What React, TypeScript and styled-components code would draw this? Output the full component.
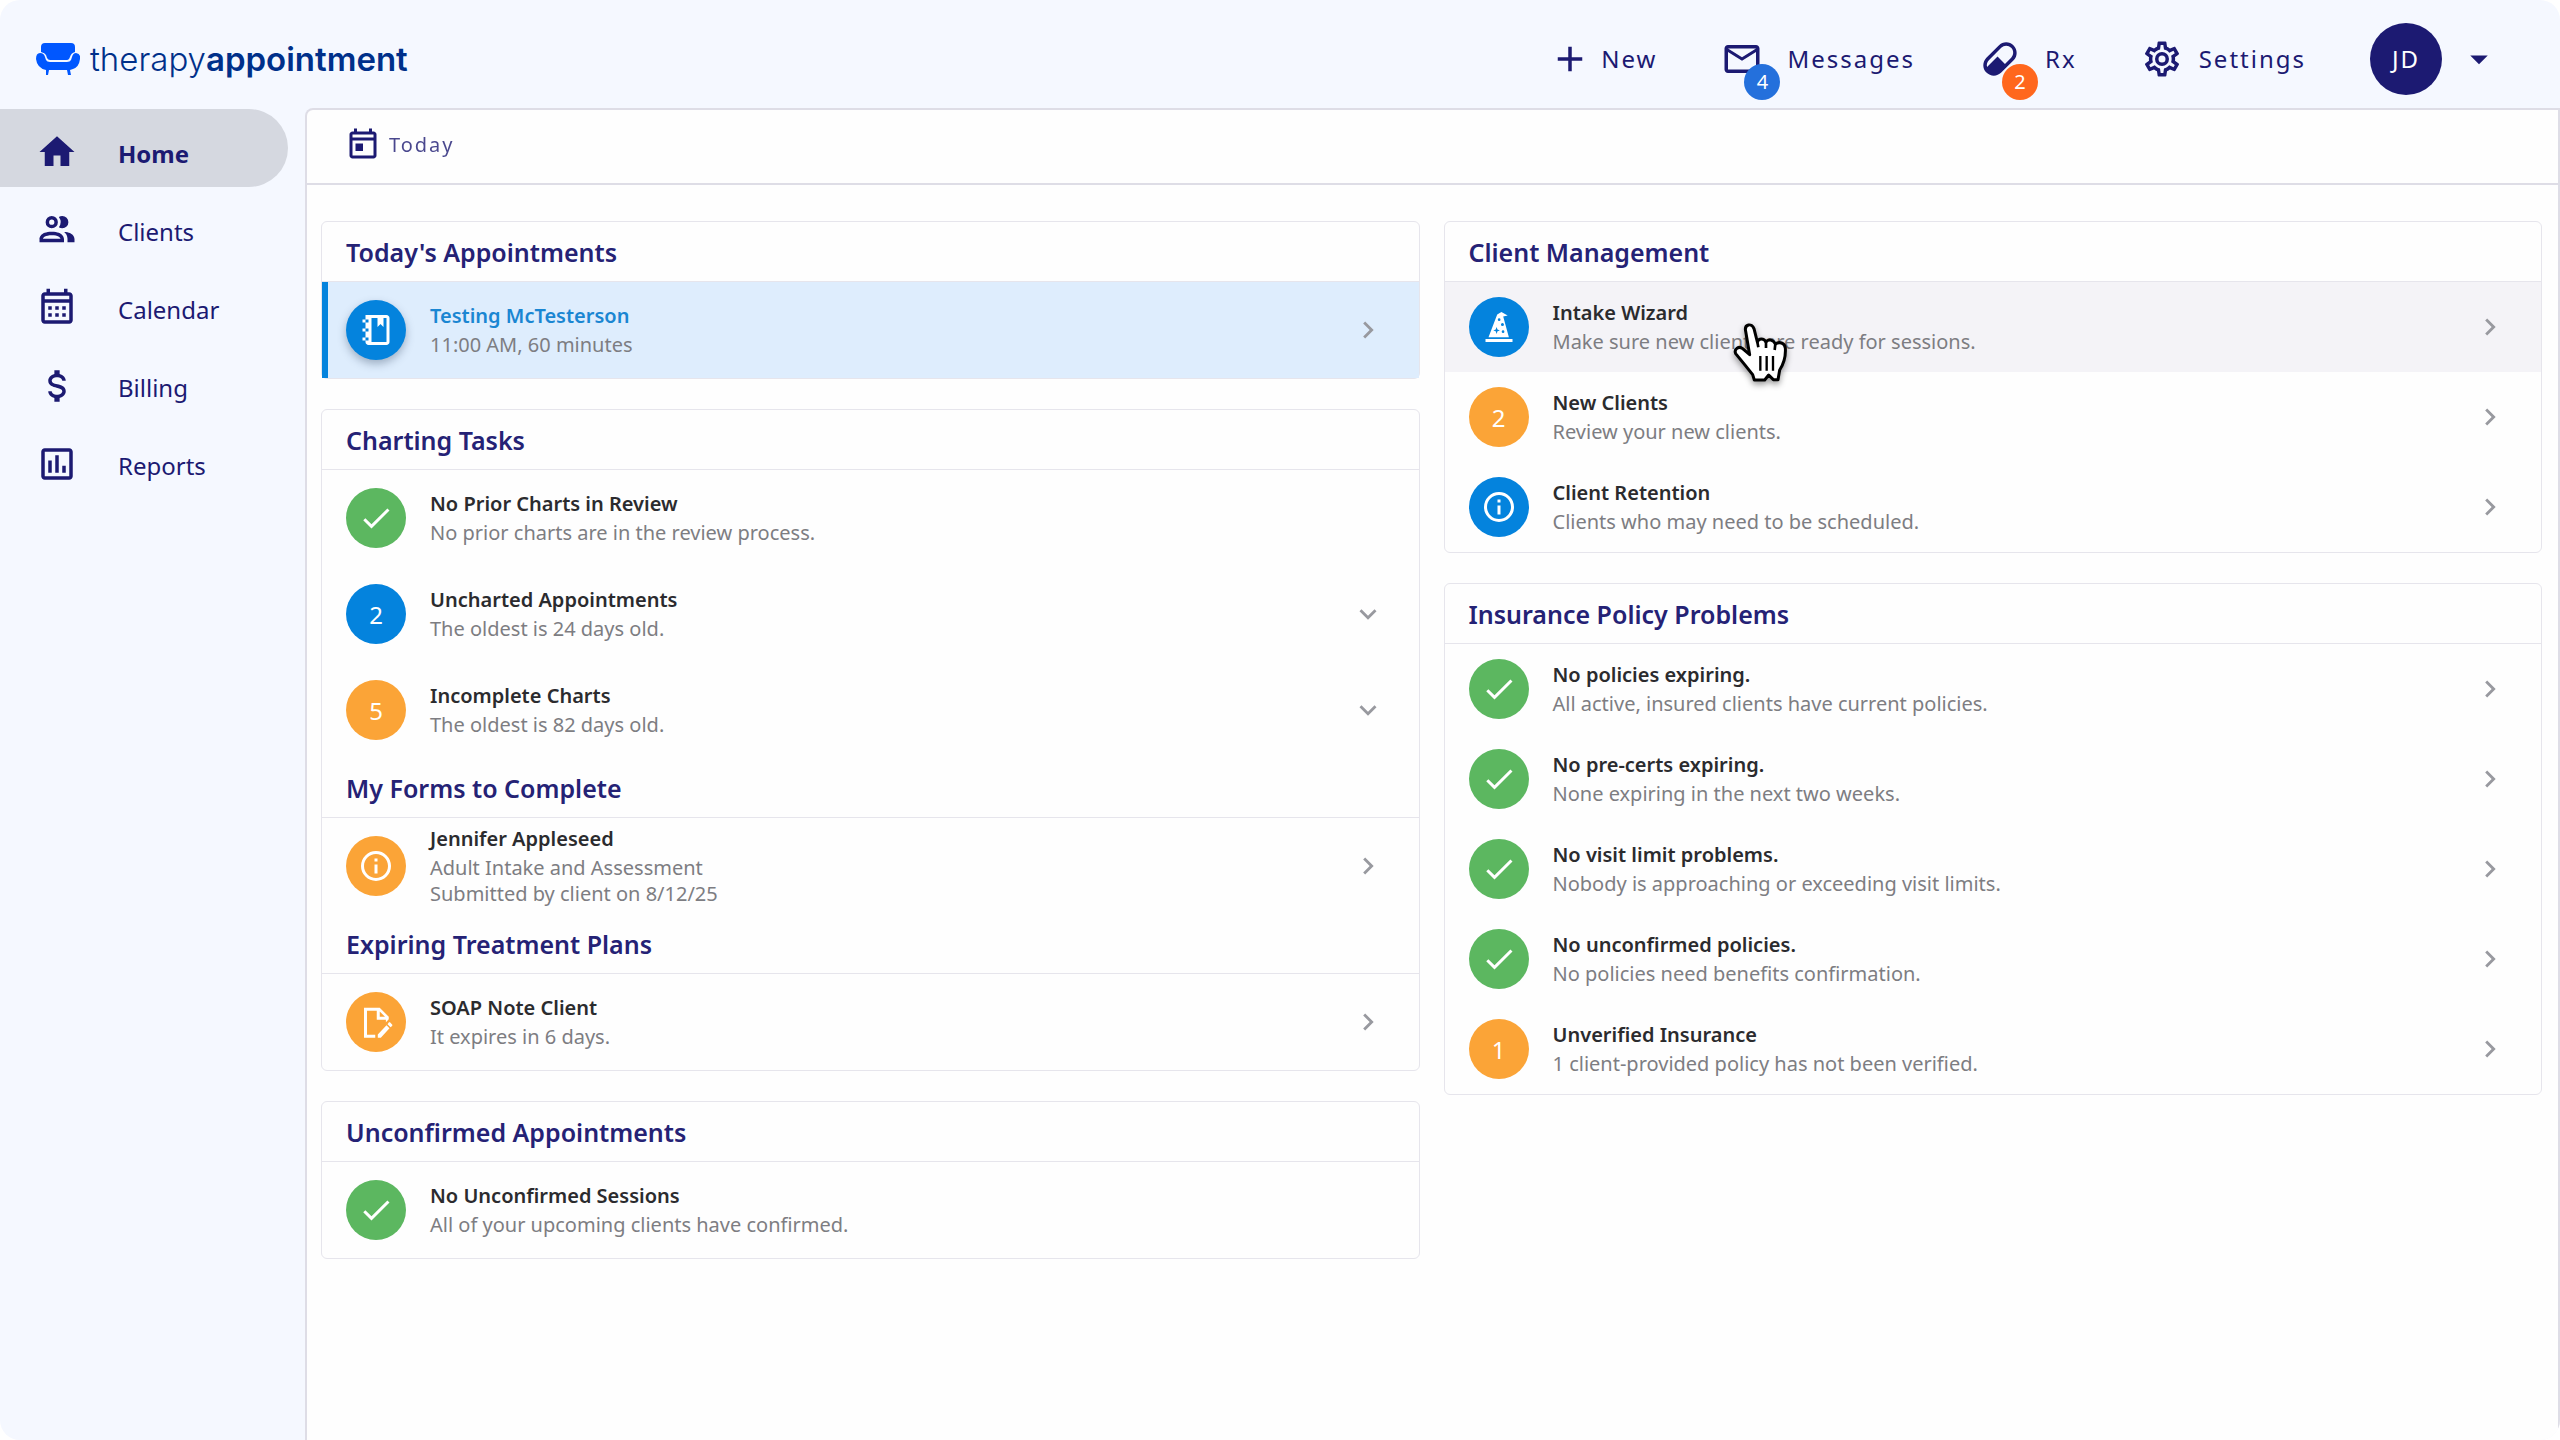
import React from "react";
import styled, { createGlobalStyle } from "styled-components";

const color = {
  shell: "#f5f8ff",
  navy: "#1c1a72",
  heading: "#252275",
  brand: "#00308a",
  sofa: "#0057ff",
  line: "#e6e5ec",
  frame: "#dedde6",
  title: "#2b2b2e",
  muted: "#7d7d82",
  blue: "#0483dd",
  green: "#5cb760",
  orange: "#fba437",
};

const GlobalStyle = createGlobalStyle`
  *, *::before, *::after { box-sizing: border-box; }
  body {
    margin: 0;
    background: #fff;
    color: ${color.navy};
    font-family: "Noto Sans", "Open Sans", sans-serif;
  }
  h1, h2, p, ul { margin: 0; padding: 0; }
  ul { list-style: none; }
  a { color: inherit; text-decoration: none; }
  button { font: inherit; color: inherit; background: none; border: 0; padding: 0; cursor: pointer; }
`;

const paths = {
  home: "M10,20V14H14V20H19V12H22L12,3L2,12H5V20H10Z",
  people:
    "M13.07 10.41A5 5 0 0 0 13.07 4.59A3.39 3.39 0 0 1 15 4A3.5 3.5 0 0 1 15 11A3.39 3.39 0 0 1 13.07 10.41M5.5 7.5A3.5 3.5 0 1 1 9 11A3.5 3.5 0 0 1 5.5 7.5M7.5 7.5A1.5 1.5 0 1 0 9 6A1.5 1.5 0 0 0 7.5 7.5M16 17V19H2V17S2 13 9 13 16 17 16 17M14 17C13.86 16.22 12.67 15 9 15S4.07 16.31 4 17M15.95 13A5.32 5.32 0 0 1 18 17V19H22V17S22 13.37 15.94 13Z",
  calendar:
    "M7 11H9V13H7V11M21 5V19C21 20.11 20.11 21 19 21H5C3.89 21 3 20.1 3 19V5C3 3.9 3.9 3 5 3H6V1H8V3H16V1H18V3H19C20.11 3 21 3.9 21 5M5 7H19V5H5V7M19 19V9H5V19H19M15 13V11H17V13H15M11 13V11H13V13H11M7 15H9V17H7V15M15 17V15H17V17H15M11 17V15H13V17H11Z",
  dollar:
    "M7,15H9C9,16.08 10.37,17 12,17C13.63,17 15,16.08 15,15C15,13.9 13.96,13.5 11.76,12.97C9.64,12.44 7,11.78 7,9C7,7.21 8.47,5.69 10.5,5.18V3H13.5V5.18C15.53,5.69 17,7.21 17,9H15C15,7.92 13.63,7 12,7C10.37,7 9,7.92 9,9C9,10.1 10.04,10.5 12.24,11.03C14.36,11.56 17,12.22 17,15C17,16.79 15.53,18.31 13.5,18.82V21H10.5V18.82C8.47,18.31 7,16.79 7,15Z",
  reports:
    "M9 17H7V10H9V17M13 17H11V7H13V17M17 17H15V13H17V17M19 19H5V5H19V19M19 3H5C3.9 3 3 3.9 3 5V19C3 20.1 3.9 21 5 21H19C20.1 21 21 20.1 21 19V5C21 3.9 20.1 3 19 3Z",
  plus: "M19,13H13V19H11V13H5V11H11V5H13V11H19V13Z",
  mail: "M22 6C22 4.9 21.1 4 20 4H4C2.9 4 2 4.9 2 6V18C2 19.1 2.9 20 4 20H20C21.1 20 22 19.1 22 18V6M20 6L12 11L4 6H20M20 18H4V8L12 13L20 8V18Z",
  pill: "M4.22,11.29L11.29,4.22C13.64,1.88 17.43,1.88 19.78,4.22C22.12,6.56 22.12,10.36 19.78,12.71L12.71,19.78C10.36,22.12 6.56,22.12 4.22,19.78C1.88,17.43 1.88,13.64 4.22,11.29M5.64,12.71C4.59,13.75 4.24,15.24 4.6,16.57L10.59,10.59L14.83,14.83L18.36,11.29C19.93,9.73 19.93,7.2 18.36,5.64C16.8,4.07 14.27,4.07 12.71,5.64L5.64,12.71Z",
  cog: "M12,8A4,4 0 0,1 16,12A4,4 0 0,1 12,16A4,4 0 0,1 8,12A4,4 0 0,1 12,8M12,10A2,2 0 0,0 10,12A2,2 0 0,0 12,14A2,2 0 0,0 14,12A2,2 0 0,0 12,10M10,22C9.75,22 9.54,21.82 9.5,21.58L9.13,18.93C8.5,18.68 7.96,18.34 7.44,17.94L4.95,18.95C4.73,19.03 4.46,18.95 4.34,18.73L2.34,15.27C2.21,15.05 2.27,14.78 2.46,14.63L4.57,12.97L4.5,12L4.57,11L2.46,9.37C2.27,9.22 2.21,8.95 2.34,8.73L4.34,5.27C4.46,5.05 4.73,4.96 4.95,5.05L7.44,6.05C7.96,5.66 8.5,5.32 9.13,5.07L9.5,2.42C9.54,2.18 9.75,2 10,2H14C14.25,2 14.46,2.18 14.5,2.42L14.87,5.07C15.5,5.32 16.04,5.66 16.56,6.05L19.05,5.05C19.27,4.96 19.54,5.05 19.66,5.27L21.66,8.73C21.79,8.95 21.73,9.22 21.54,9.37L19.43,11L19.5,12L19.43,13L21.54,14.63C21.73,14.78 21.79,15.05 21.66,15.27L19.66,18.73C19.54,18.95 19.27,19.04 19.05,18.95L16.56,17.95C16.04,18.34 15.5,18.68 14.87,18.93L14.5,21.58C14.46,21.82 14.25,22 14,22H10M11.25,4L10.88,6.61C9.68,6.86 8.62,7.5 7.85,8.39L5.44,7.35L4.69,8.65L6.8,10.2C6.4,11.37 6.4,12.64 6.8,13.8L4.68,15.36L5.43,16.66L7.86,15.62C8.63,16.5 9.68,17.14 10.87,17.38L11.24,20H12.76L13.13,17.39C14.32,17.14 15.37,16.5 16.14,15.62L18.57,16.66L19.32,15.36L17.2,13.81C17.6,12.64 17.6,11.37 17.2,10.2L19.31,8.65L18.56,7.35L16.15,8.39C15.38,7.5 14.32,6.86 13.12,6.62L12.75,4H11.25Z",
  caret: "M7,10L12,15L17,10H7Z",
  today:
    "M19 3H18V1H16V3H8V1H6V3H5C3.9 3 3 3.9 3 5V19C3 20.1 3.9 21 5 21H19C20.1 21 21 20.1 21 19V5C21 3.9 20.1 3 19 3M19 19H5V9H19V19M19 7H5V5H19V7M7 11H12V16H7V11Z",
  check: "M21,7L9,19L3.5,13.5L4.91,12.09L9,16.17L19.59,5.59L21,7Z",
  info: "M11,9H13V7H11M12,20C7.59,20 4,16.41 4,12C4,7.59 7.59,4 12,4C16.41,4 20,7.59 20,12C20,16.41 16.41,20 12,20M12,2A10,10 0 0,0 2,12A10,10 0 0,0 12,22A10,10 0 0,0 22,12A10,10 0 0,0 12,2M11,17H13V11H11V17Z",
  notebook:
    "M5 2H19C20.1 2 21 2.9 21 4V20C21 21.1 20.1 22 19 22H7C5.9 22 5 21.1 5 20V19H3V17H5V13H3V11H5V7H3V5H5V2M9 4V20H19V4H17V10L15 8L13 10V4H9M5 5V7H7V5H5M5 11V13H7V11H5M5 17V19H7V17H5Z",
  wizard:
    "M3 20H21V22H3V20M17.8 4.3L13.6 2L10.8 3.6L5 18.8H18.6L14.8 5L17.8 4.3M12.1 6.2A.9 .9 0 1 1 12.1 8A.9 .9 0 0 1 12.1 6.2M14.3 9.4A1 1 0 1 1 14.3 11.4A1 1 0 0 1 14.3 9.4M10.4 12L11 13.7L12.6 14.3L11 14.9L10.4 16.6L9.8 14.9L8.2 14.3L9.8 13.7L10.4 12M14.7 14.2A.9 .9 0 1 1 14.7 16A.9 .9 0 0 1 14.7 14.2Z",
  noteEdit:
    "M4 2.5H14.5L20.5 8.5V10.2L18.6 12.1V10.5H12.5V4.5H6V20.5H11.5V22.5H4V2.5M14.5 5V8.5H18L14.5 5M20.9 12.2C21.1 12.2 21.3 12.3 21.5 12.4L22.7 13.7C23 13.9 23 14.3 22.7 14.6L21.7 15.5L19.7 13.5L20.5 12.4C20.6 12.3 20.8 12.2 20.9 12.2M19 14.1L21 16.1L15.2 22.5H13.2V20.4L19 14.1Z",
  right: "M8.59,16.58L13.17,12L8.59,7.41L10,6L16,12L10,18L8.59,16.58Z",
  down: "M7.41,8.58L12,13.17L16.59,8.58L18,10L12,16L6,10L7.41,8.58Z",
};
type IconName = keyof typeof paths;

const IconSvg = styled.svg<{ $size: number }>`
  display: block;
  flex: none;
  width: ${(p) => p.$size}px;
  height: ${(p) => p.$size}px;
  fill: currentColor;
  fill-rule: evenodd;
`;

const Icon = ({ name, size = 42 }: { name: IconName; size?: number }) => (
  <IconSvg $size={size} viewBox="0 0 24 24" aria-hidden="true">
    <path d={paths[name]} />
  </IconSvg>
);

const Shell = styled.div`
  display: grid;
  grid-template: auto 1fr / 305px minmax(0, 1fr);
  min-height: 100vh;
  overflow: hidden;
  border-radius: 20px;
  background: ${color.shell};
`;

const TopBar = styled.header`
  grid-column: 1 / -1;
  display: flex;
  align-items: center;
  justify-content: space-between;
  height: 108px;
  padding: 10px 60px 0 36px;
`;

const Brand = styled.a`
  display: flex;
  align-items: center;
  gap: 10px;
  color: ${color.brand};
  font-family: Inter, "Noto Sans", sans-serif;
  font-size: 33px;
  line-height: 40px;
  font-weight: 300;

  strong { font-weight: 600; }
`;

const BrandMark = styled.svg`
  width: 44px;
  height: 34px;
  fill: ${color.sofa};
`;

const Actions = styled.div`
  display: flex;
  align-items: center;
  gap: 64px;
`;

const Action = styled.button<{ $gap: number }>`
  display: flex;
  align-items: center;
  gap: ${(p) => p.$gap}px;
  font-size: 24px;
  line-height: 32px;
  letter-spacing: 2px;
`;

const Badged = styled.span`
  position: relative;
  display: block;
`;

const Badge = styled.span<{ $bg: string }>`
  position: absolute;
  left: 23px;
  top: 26px;
  width: 36px;
  height: 36px;
  border-radius: 50%;
  background: ${(p) => p.$bg};
  color: #fff;
  font-size: 20px;
  line-height: 36px;
  letter-spacing: 0;
  text-align: center;
`;

const Avatar = styled.span`
  display: grid;
  place-items: center;
  width: 72px;
  height: 72px;
  border-radius: 50%;
  background: ${color.navy};
  color: #fff;
`;

const SideNav = styled.nav`
  padding-top: 1px;
`;

const NavLink = styled.a<{ $active?: boolean }>`
  display: flex;
  align-items: center;
  gap: 40px;
  width: 288px;
  height: 78px;
  padding: 8px 0 0 36px;
  border-radius: 0 40px 40px 0;
  background: ${(p) => (p.$active ? "#d5d8e0" : "transparent")};
  font-size: 24px;
  line-height: 32px;
  font-weight: ${(p) => (p.$active ? 700 : 400)};

  span { padding-top: 4px; }
`;

const Main = styled.main`
  border: 2px solid ${color.frame};
  border-bottom: 0;
  border-top-left-radius: 8px;
  background: #fefefe;
`;

const TabBar = styled.div`
  display: flex;
  align-items: center;
  height: 75px;
  padding: 0 38px 4px;
  border-bottom: 2px solid ${color.frame};
`;

const Tab = styled.button`
  display: flex;
  align-items: center;
  gap: 8px;
  color: ${color.navy};
  font-size: 20px;
  line-height: 28px;
  letter-spacing: 2px;

  span { opacity: 0.8; }
`;

const Columns = styled.div`
  display: grid;
  grid-template-columns: repeat(2, minmax(0, 1fr));
  align-items: start;
  gap: 24px;
  padding: 36px 16px 36px 14px;
`;

const Column = styled.div`
  display: grid;
  gap: 30px;
`;

const Card = styled.section`
  border: 1px solid ${color.line};
  border-radius: 6px;
  background: #fefefe;
`;

const CardHeading = styled.h2`
  height: 60px;
  padding: 0 24px;
  border-bottom: 1px solid ${color.line};
  color: ${color.heading};
  font-size: 25px;
  line-height: 60px;
  font-weight: 600;
`;

type Tone = "none" | "active" | "hover";

const RowLink = styled.a<{ $height: number; $tone: Tone }>`
  position: relative;
  display: flex;
  align-items: center;
  gap: 24px;
  height: ${(p) => p.$height}px;
  padding: 0 34px 0 24px;
  background: ${(p) =>
    p.$tone === "active" ? "#deedfd" : p.$tone === "hover" ? "#f4f3f7" : "transparent"};
  box-shadow: ${(p) => (p.$tone === "active" ? `inset 6px 0 ${color.blue}` : "none")};
`;

const Disc = styled.span<{ $bg: string; $raised: boolean }>`
  display: grid;
  place-items: center;
  flex: none;
  width: 60px;
  height: 60px;
  border-radius: 50%;
  background: ${(p) => p.$bg};
  box-shadow: ${(p) => (p.$raised ? "0 4px 8px rgba(40, 60, 90, 0.35)" : "none")};
  color: #fff;
  font-size: 24px;
`;

const RowText = styled.span`
  flex: 1;
  min-width: 0;
`;

const RowTitle = styled.span<{ $tone: Tone }>`
  display: block;
  margin-bottom: 2px;
  color: ${(p) => (p.$tone === "active" ? "#1a86d2" : color.title)};
  font-size: 20px;
  line-height: 28px;
  font-weight: 600;
`;

const RowDetail = styled.span`
  display: block;
  color: ${color.muted};
  font-size: 20px;
  line-height: 26px;
`;

const RowArrow = styled.span`
  color: #98999f;
`;

const Pointer = styled.svg`
  position: absolute;
  left: 288px;
  top: 40px;
  width: 60px;
  height: 64px;
  overflow: visible;
  filter: drop-shadow(0 3px 3px rgba(0, 0, 0, 0.4));
  pointer-events: none;
  z-index: 1;
`;

const HandPointer = () => (
  <Pointer viewBox="35 36 180 192" aria-hidden="true">
    <path
      d="M73 64C68 42 92 38 98 56L108 96C112 84 128 84 134 96C140 87 156 88 162 102C174 94 190 98 192 114C194 142 188 160 175 180L170 209H156L142 195L130 210H99L94 194L70 164L43 131C37 116 53 107 64 116L85 134Z"
      fill="#fff"
      stroke="#000"
      strokeWidth="9"
      strokeLinejoin="round"
    />
    <path d="M108 96L111 112M134 96V114M162 102L160 120" stroke="#000" strokeWidth="8" fill="none" />
    <path d="M117 138V182M136 138V182M155 138V182" stroke="#000" strokeWidth="7" />
  </Pointer>
);

interface RowData {
  title: string;
  detail: string[];
  bg: string;
  icon?: IconName;
  count?: number;
  arrow?: "right" | "down";
  tone?: Tone;
  pointer?: boolean;
}
interface Group {
  heading: string;
  rows: RowData[];
}

const ok = (title: string, detail: string, arrow?: "right"): RowData => ({
  title,
  detail: [detail],
  bg: color.green,
  icon: "check",
  arrow,
});

const leftCards: Group[][] = [
  [
    {
      heading: "Today's Appointments",
      rows: [
        { title: "Testing McTesterson", detail: ["11:00 AM, 60 minutes"], bg: color.blue, icon: "notebook", arrow: "right", tone: "active" },
      ],
    },
  ],
  [
    {
      heading: "Charting Tasks",
      rows: [
        ok("No Prior Charts in Review", "No prior charts are in the review process."),
        { title: "Uncharted Appointments", detail: ["The oldest is 24 days old."], bg: color.blue, count: 2, arrow: "down" },
        { title: "Incomplete Charts", detail: ["The oldest is 82 days old."], bg: color.orange, count: 5, arrow: "down" },
      ],
    },
    {
      heading: "My Forms to Complete",
      rows: [
        { title: "Jennifer Appleseed", detail: ["Adult Intake and Assessment", "Submitted by client on 8/12/25"], bg: color.orange, icon: "info", arrow: "right" },
      ],
    },
    {
      heading: "Expiring Treatment Plans",
      rows: [
        { title: "SOAP Note Client", detail: ["It expires in 6 days."], bg: color.orange, icon: "noteEdit", arrow: "right" },
      ],
    },
  ],
  [
    {
      heading: "Unconfirmed Appointments",
      rows: [ok("No Unconfirmed Sessions", "All of your upcoming clients have confirmed.")],
    },
  ],
];

const rightCards: Group[][] = [
  [
    {
      heading: "Client Management",
      rows: [
        { title: "Intake Wizard", detail: ["Make sure new clients are ready for sessions."], bg: color.blue, icon: "wizard", arrow: "right", tone: "hover", pointer: true },
        { title: "New Clients", detail: ["Review your new clients."], bg: color.orange, count: 2, arrow: "right" },
        { title: "Client Retention", detail: ["Clients who may need to be scheduled."], bg: color.blue, icon: "info", arrow: "right" },
      ],
    },
  ],
  [
    {
      heading: "Insurance Policy Problems",
      rows: [
        ok("No policies expiring.", "All active, insured clients have current policies.", "right"),
        ok("No pre-certs expiring.", "None expiring in the next two weeks.", "right"),
        ok("No visit limit problems.", "Nobody is approaching or exceeding visit limits.", "right"),
        ok("No unconfirmed policies.", "No policies need benefits confirmation.", "right"),
        { title: "Unverified Insurance", detail: ["1 client-provided policy has not been verified."], bg: color.orange, count: 1, arrow: "right" },
      ],
    },
  ],
];

const Row = ({ row, height }: { row: RowData; height: number }) => {
  const tone = row.tone ?? "none";
  return (
    <RowLink href="#" $height={height} $tone={tone}>
      <Disc $bg={row.bg} $raised={tone === "active"}>
        {row.icon ? <Icon name={row.icon} size={36} /> : row.count}
      </Disc>
      <RowText>
        <RowTitle $tone={tone}>{row.title}</RowTitle>
        {row.detail.map((line) => (
          <RowDetail key={line}>{line}</RowDetail>
        ))}
      </RowText>
      {row.arrow && (
        <RowArrow>
          <Icon name={row.arrow} size={34} />
        </RowArrow>
      )}
      {row.pointer && <HandPointer />}
    </RowLink>
  );
};

const CardColumn = ({ cards, rowHeight }: { cards: Group[][]; rowHeight: number }) => (
  <Column>
    {cards.map((groups) => (
      <Card key={groups[0].heading}>
        {groups.map((group) => (
          <React.Fragment key={group.heading}>
            <CardHeading>{group.heading}</CardHeading>
            {group.rows.map((row) => (
              <Row key={row.title} row={row} height={rowHeight} />
            ))}
          </React.Fragment>
        ))}
      </Card>
    ))}
  </Column>
);

const navItems: { label: string; icon: IconName }[] = [
  { label: "Home", icon: "home" },
  { label: "Clients", icon: "people" },
  { label: "Calendar", icon: "calendar" },
  { label: "Billing", icon: "dollar" },
  { label: "Reports", icon: "reports" },
];

export default function App() {
  return (
    <>
      <GlobalStyle />
      <Shell>
        <TopBar>
          <Brand href="#">
            <BrandMark viewBox="0 0 44 34" aria-hidden="true">
              <path d="M9 1H35Q39 1 39 5V10Q35 11 34 15L33 17Q32 18 31 18H14Q12 18 11 16L10 13Q9 11 5 10V5Q5 1 9 1Z" />
              <path d="M4 11Q8 11 9 15L10 18Q11 20 14 20H31Q34 20 35 18L36 15Q37 11 40 11Q45 12 44 17Q43 25 37 27L34 28L35 33H32L31 28H13L12 33H10V28Q1 26 0 17Q0 11 4 11Z" />
            </BrandMark>
            <span>
              therapy<strong>appointment</strong>
            </span>
          </Brand>
          <Actions>
            <Action $gap={10}>
              <Icon name="plus" />
              New
            </Action>
            <Action $gap={24}>
              <Badged>
                <Icon name="mail" />
                <Badge $bg="#2470dc">4</Badge>
              </Badged>
              Messages
            </Action>
            <Action $gap={24}>
              <Badged>
                <Icon name="pill" />
                <Badge $bg="#ff671d">2</Badge>
              </Badged>
              Rx
            </Action>
            <Action $gap={16}>
              <Icon name="cog" />
              Settings
            </Action>
            <Action $gap={16} aria-label="Account menu">
              <Avatar>JD</Avatar>
              <Icon name="caret" />
            </Action>
          </Actions>
        </TopBar>
        <SideNav>
          {navItems.map((item, i) => (
            <NavLink key={item.label} href="#" $active={i === 0}>
              <Icon name={item.icon} />
              <span>{item.label}</span>
            </NavLink>
          ))}
        </SideNav>
        <Main>
          <TabBar>
            <Tab>
              <Icon name="today" size={36} />
              <span>Today</span>
            </Tab>
          </TabBar>
          <Columns>
            <CardColumn cards={leftCards} rowHeight={96} />
            <CardColumn cards={rightCards} rowHeight={90} />
          </Columns>
        </Main>
      </Shell>
    </>
  );
}
